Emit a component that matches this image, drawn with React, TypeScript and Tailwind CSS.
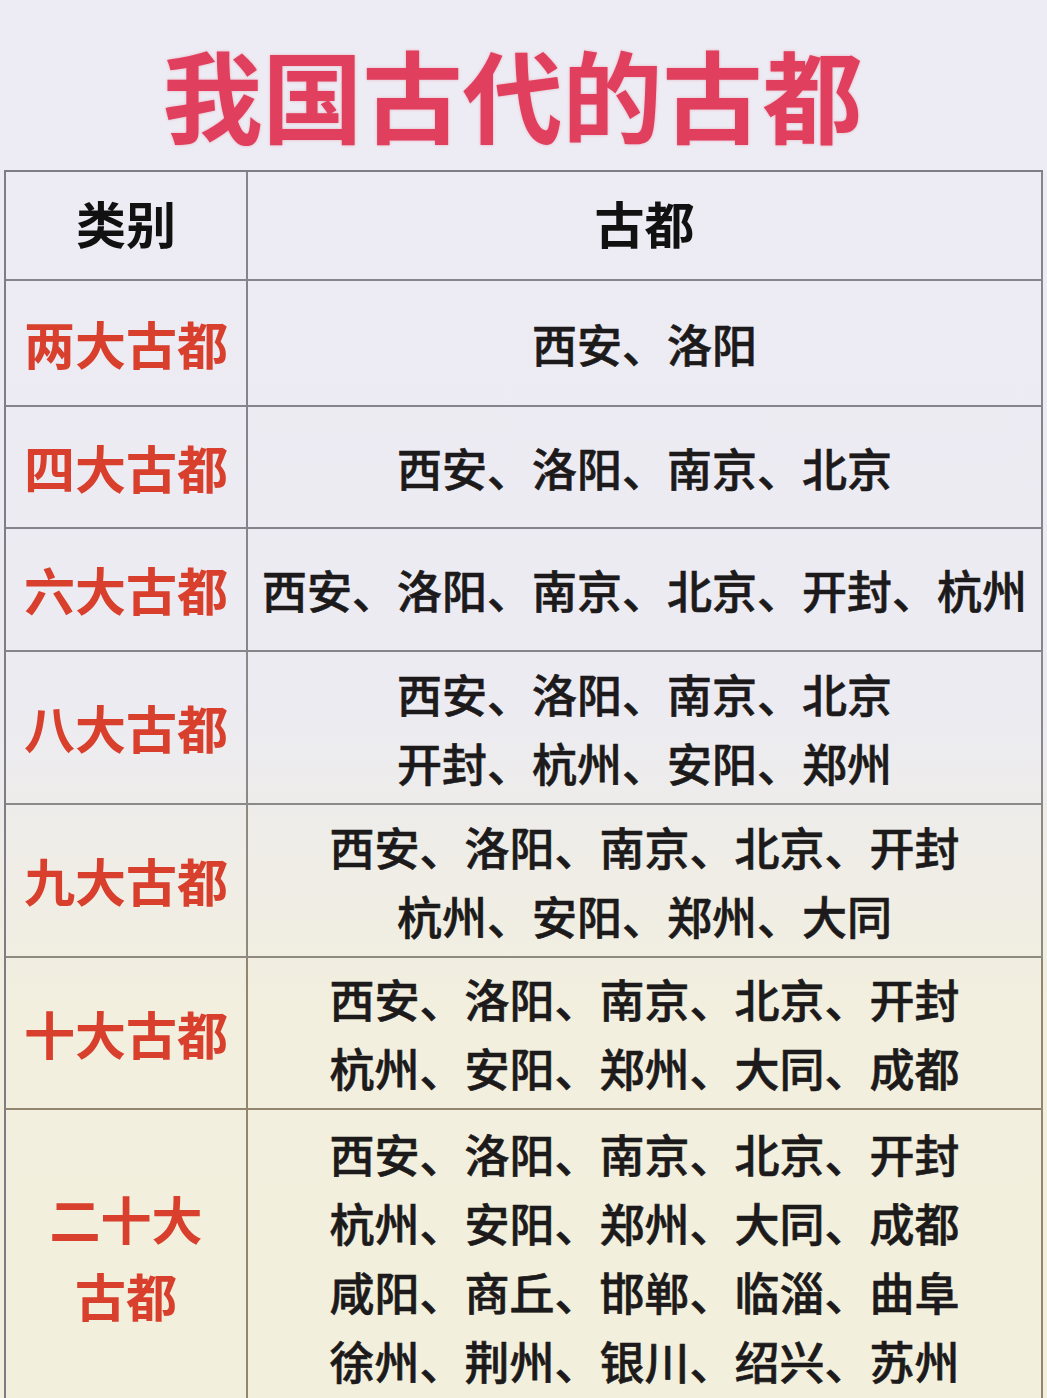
const CJK = "font-['Noto_Sans_CJK_SC','Noto_Sans',sans-serif]";

type Row = {
  label: string[];
  lines: string[];
  height: string;
  border: string;
};

const rows: Row[] = [
  { label: ["两大古都"], lines: ["西安、洛阳"], height: "h-[126px]", border: "border-[#85848c]" },
  { label: ["四大古都"], lines: ["西安、洛阳、南京、北京"], height: "h-[122px]", border: "border-[#85848c]" },
  {
    label: ["六大古都"],
    lines: ["西安、洛阳、南京、北京、开封、杭州"],
    height: "h-[123px]",
    border: "border-[#86858a]",
  },
  {
    label: ["八大古都"],
    lines: ["西安、洛阳、南京、北京", "开封、杭州、安阳、郑州"],
    height: "h-[153px]",
    border: "border-[#8a8888]",
  },
  {
    label: ["九大古都"],
    lines: ["西安、洛阳、南京、北京、开封", "杭州、安阳、郑州、大同"],
    height: "h-[153px]",
    border: "border-[#8e8a82]",
  },
  {
    label: ["十大古都"],
    lines: ["西安、洛阳、南京、北京、开封", "杭州、安阳、郑州、大同、成都"],
    height: "h-[152px]",
    border: "border-[#928670]",
  },
  {
    label: ["二十大", "古都"],
    lines: [
      "西安、洛阳、南京、北京、开封",
      "杭州、安阳、郑州、大同、成都",
      "咸阳、商丘、邯郸、临淄、曲阜",
      "徐州、荆州、银川、绍兴、苏州",
    ],
    height: "h-[296px]",
    border: "border-[#928670]",
  },
];

export default function App() {
  return (
    <div
      className={`${CJK} h-[1398px] w-[1047px] overflow-hidden bg-[linear-gradient(180deg,#edecf4_0%,#ecebf2_50%,#efede6_62%,#f2efdf_72%,#f2efdc_100%)]`}
    >
      <h1 className="pr-[22px] pt-[40px] text-center text-[100px] font-bold leading-[106px] text-[#e0405e] [text-shadow:0_0_3px_rgba(224,64,94,0.35)]">
        我国古代的古都
      </h1>

      <div className="ml-[4px] mt-[24px] w-[1039px] border-l-2 border-t-2 border-[#7e7d86]">
        <div className="grid h-[109px] grid-cols-[242px_1fr]">
          <div className="flex items-center justify-center border-b-2 border-r-2 border-[#85848c] pb-[6px] text-[50px] font-bold text-[#111]">
            类别
          </div>
          <div className="flex items-center justify-center border-b-2 border-r-2 border-[#85848c] pb-[6px] text-[50px] font-bold text-[#111]">
            古都
          </div>
        </div>

        {rows.map((r) => (
          <div key={r.label.join("")} className={`grid grid-cols-[242px_1fr] ${r.height}`}>
            <div
              className={`flex flex-col items-center justify-center border-b-2 border-r-2 ${r.border} text-[51px] font-bold leading-[77px] text-[#d8402d]`}
            >
              {r.label.map((l) => (
                <div key={l}>{l}</div>
              ))}
            </div>
            <div
              className={`flex flex-col items-center justify-center border-b-2 border-r-2 ${r.border} text-[45px] font-medium leading-[69px] text-[#1c1a1a] [-webkit-text-stroke:0.6px_#1c1a1a]`}
            >
              {r.lines.map((l) => (
                <div key={l} className="whitespace-nowrap">
                  {l}
                </div>
              ))}
            </div>
          </div>
        ))}
      </div>
    </div>
  );
}
